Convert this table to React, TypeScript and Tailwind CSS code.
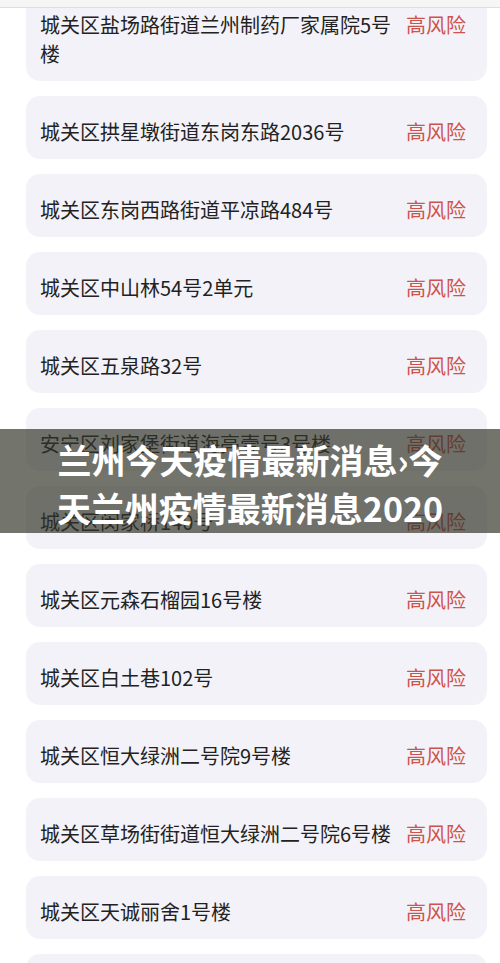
const places = [
  "城关区盐场路街道兰州制药厂家属院5号楼",
  "城关区拱星墩街道东岗东路2036号",
  "城关区东岗西路街道平凉路484号",
  "城关区中山林54号2单元",
  "城关区五泉路32号",
  "安宁区刘家堡街道海亮壹号3号楼",
  "城关区闵家桥140号",
  "城关区元森石榴园16号楼",
  "城关区白土巷102号",
  "城关区恒大绿洲二号院9号楼",
  "城关区草场街街道恒大绿洲二号院6号楼",
  "城关区天诚丽舍1号楼",
];

export default function App() {
  return (
    <main
      className="relative h-[963px] w-[500px] overflow-hidden bg-white"
      style={{ fontFamily: '"Noto Sans CJK SC", "Noto Sans", sans-serif' }}
    >
      {/* top bar edge */}
      <div className="absolute inset-x-0 top-0 z-10 h-[8px] border-b border-[#dedede] bg-[#f6f6f6]"></div>

      {/* risk list */}
      <div className="-mt-[11px] flex flex-col gap-[15px] pl-[26px] pr-[13px]">
        {places.map((p) => (
          <div
            key={p}
            className="flex items-start justify-between rounded-[14px] bg-[#f3f2f8] pb-[13px] pl-[14px] pr-[21px] pt-[21px] text-[20px] leading-[29px]"
          >
            <span className="w-[364px] text-[#222222]">{p}</span>
            <span className="shrink-0 text-[#cf534d]">高风险</span>
          </div>
        ))}
        {/* next card, scrolled below the fold */}
        <div className="h-[63px] shrink-0 rounded-[14px] bg-[#f3f2f8]"></div>
      </div>

      {/* title overlay */}
      <div className="absolute inset-x-0 top-[429px] h-[104px] bg-[rgba(48,50,38,0.68)] px-[45px] pt-[7px]">
        <h1 className="text-center text-[34px] font-bold leading-[48px] text-white">
          兰州今天疫情最新消息›今天兰州疫情最新消息2020
        </h1>
      </div>
    </main>
  );
}
